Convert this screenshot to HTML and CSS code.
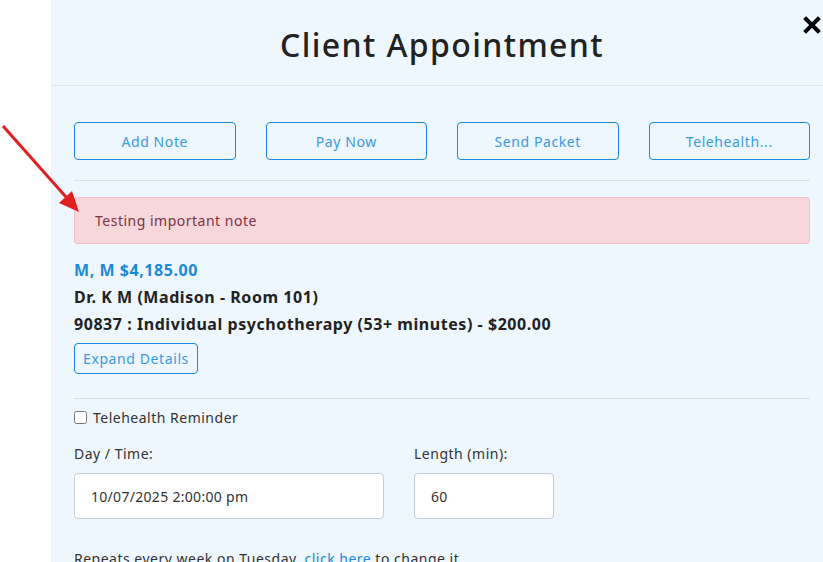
FILE: index.html
```html
<!DOCTYPE html>
<html lang="en">
<head>
  <meta charset="UTF-8">
  <title>Client Appointment</title>
  <link rel="stylesheet" href="styles.css">
</head>
<body>

<div class="page">
  <div class="gutter"></div>
  <div class="modal">
    <header class="modal-head">
      <h1>Client Appointment</h1>
      <button class="close-btn" aria-label="Close">
        <svg width="18" height="18" viewBox="0 0 18 18"><path d="M3 3 L15 15 M15 3 L3 15" stroke="#000" stroke-width="4" stroke-linecap="square"/></svg>
      </button>
    </header>

    <div class="modal-body">
      <div class="actions">
        <button class="outline-btn">Add Note</button>
        <button class="outline-btn">Pay Now</button>
        <button class="outline-btn">Send Packet</button>
        <button class="outline-btn">Telehealth...</button>
      </div>

      <hr>

      <div class="alert">Testing important note</div>

      <div class="info">
        <p class="client">M, M $4,185.00</p>
        <p class="strong">Dr. K M (Madison - Room 101)</p>
        <p class="strong">90837 : Individual psychotherapy (53+ minutes) - $200.00</p>
      </div>
      <button class="outline-btn small">Expand Details</button>

      <hr class="sep">

      <label class="check"><input type="checkbox"> Telehealth Reminder</label>

      <div class="fields">
        <div class="field">
          <label>Day / Time:</label>
          <input type="text" class="day" value="10/07/2025 2:00:00 pm">
        </div>
        <div class="field">
          <label>Length (min):</label>
          <input type="text" class="len" value="60">
        </div>
      </div>

      <p class="repeat">Repeats every week on Tuesday, <a href="#">click here</a> to change it</p>
    </div>
  </div>
</div>

<svg class="arrow" width="90" height="220" viewBox="0 0 90 220">
  <line x1="3" y1="126" x2="66" y2="197" stroke="#e02020" stroke-width="3"/>
  <polygon points="79,212 59,203 72,191" fill="#e02020"/>
</svg>

</body>
</html>
```

FILE: styles.css
```css
html, body { margin: 0; height: 100%; overflow: hidden; }
body { font-family: "Noto Sans", "Open Sans", sans-serif; background: #fff; color: #222; font-size: 14px; letter-spacing: 0.5px; }
.page { display: flex; width: 900px; height: 100%; }
.gutter { width: 51px; flex: none; background: #fff; }
.modal { width: 782px; flex: none; background: #eef6fe; position: relative; }

.modal-head { height: 85px; border-bottom: 1px solid #dce4ec; display: flex; align-items: center; justify-content: center; }
.modal-head h1 { margin: 0; font-size: 32px; font-weight: 500; color: #222; letter-spacing: 1.4px; padding-top: 4px; }
.close-btn { position: absolute; left: 752px; top: 16px; background: none; border: none; padding: 0; cursor: pointer; }
.close-btn svg { display: block; }

.modal-body { padding: 36px 23px 0; }
.actions { display: grid; grid-template-columns: repeat(4, 1fr); gap: 30px; }
.outline-btn { font-family: inherit; letter-spacing: 0.6px; height: 38px; background: transparent; border: 1px solid #1a8ad8; border-radius: 4px; color: #3a9be0; font-size: 14px; cursor: pointer; }
.outline-btn.small { height: 31px; padding: 0 8px; font-size: 14px; }

hr { border: none; border-top: 1px solid #d9dfe6; margin: 20px 0 16px; }
hr.sep { margin: 24px 0 9px; }

.alert { height: 47px; box-sizing: border-box; padding: 0 20px; display: flex; align-items: center; background: #f8d7da; border: 1px solid #f3c0c5; border-radius: 3px; color: #7b3346; font-size: 14px; }

.info { margin-top: 13px; margin-bottom: 5px; }
.info p { margin: 0; line-height: 27px; font-size: 16px; font-weight: 700; letter-spacing: 0.55px; }
.info .client { color: #1a8ad8; }
.info .strong { color: #222; }

.check { display: flex; align-items: center; gap: 6px; font-size: 14px; color: #333; height: 18px; }
.check input { margin: 0; width: 13px; height: 13px; }

.fields { display: flex; gap: 30px; margin-top: 19px; }
.field { display: flex; flex-direction: column; }
.field label { font-size: 14px; color: #333; line-height: 18px; margin-bottom: 10px; }
.field input { font-family: inherit; letter-spacing: 0.3px; font-size: 14px; color: #333; height: 46px; box-sizing: border-box; padding: 0 16px; border: 1px solid #c9ced4; border-radius: 4px; background: #fff; }
.field input.day { width: 310px; }
.field input.len { width: 140px; }

.repeat { margin: 30px 0 0; font-size: 14px; color: #333; }
.repeat a { color: #1a8ad8; }

.arrow { position: absolute; left: 0; top: 0; }
```
